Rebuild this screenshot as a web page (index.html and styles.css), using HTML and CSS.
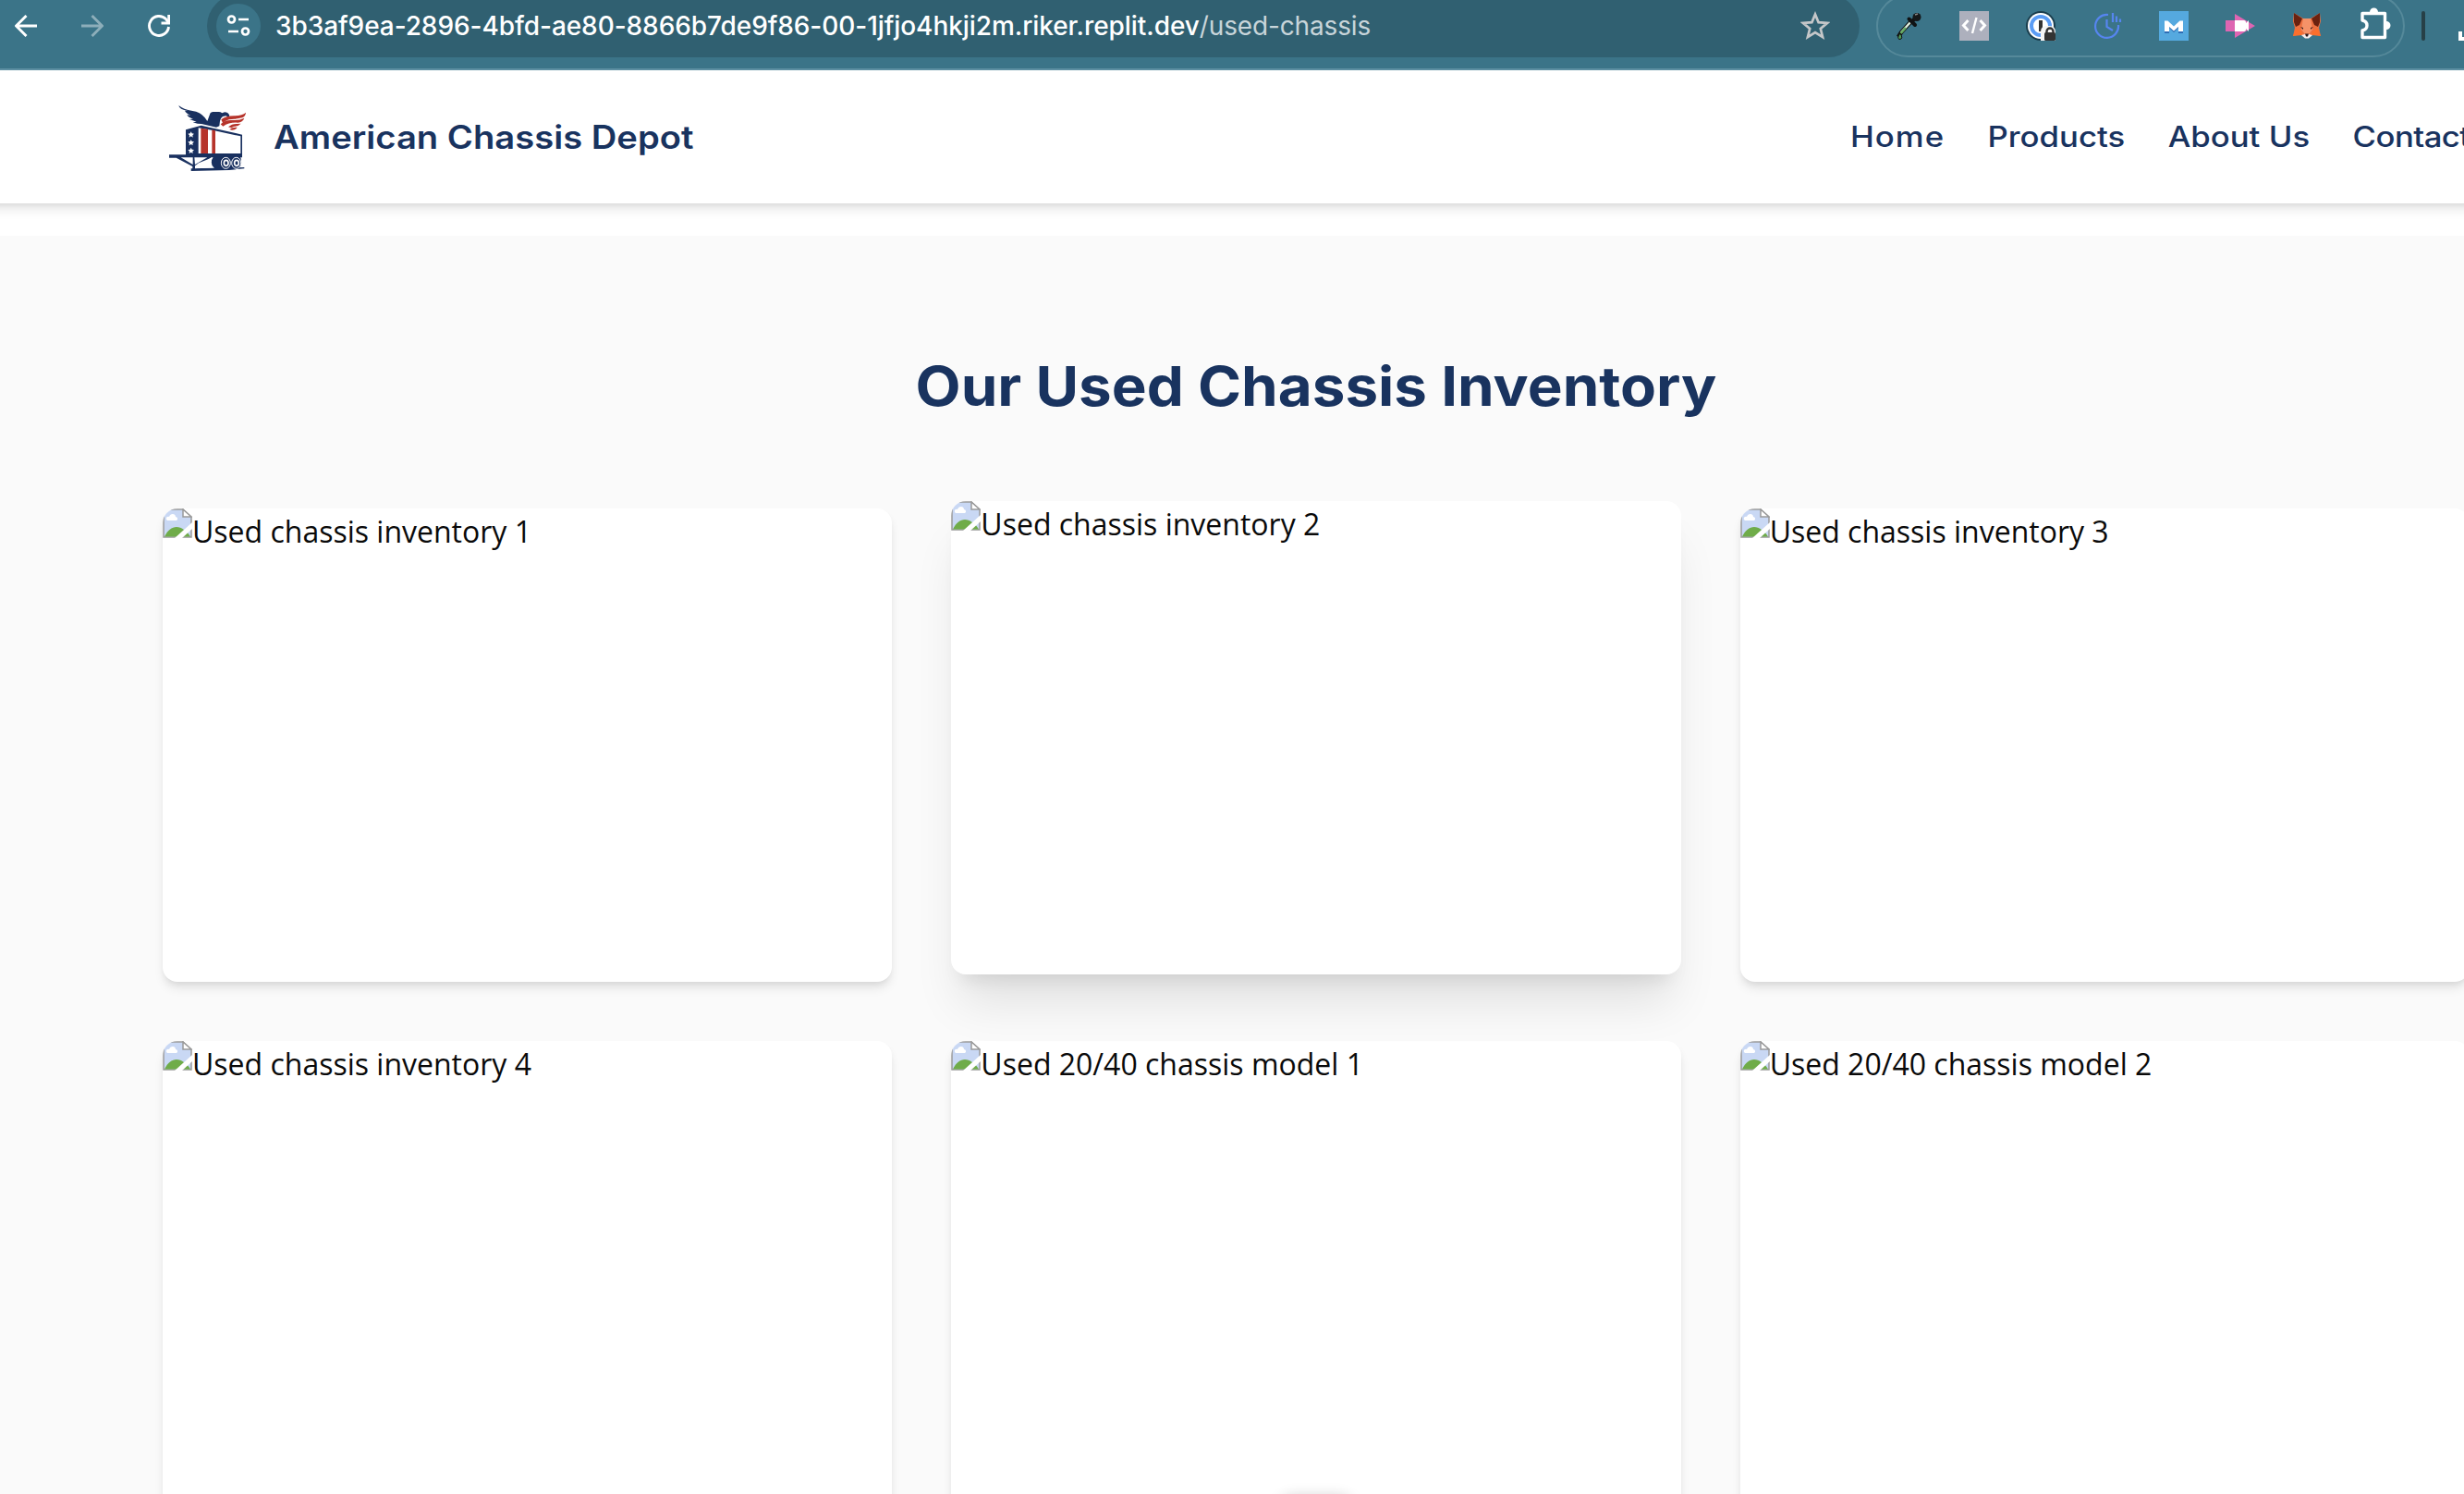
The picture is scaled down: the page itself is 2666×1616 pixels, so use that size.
FILE: index.html
```html
<!DOCTYPE html>
<html lang="en">
<head>
<meta charset="utf-8">
<title>American Chassis Depot</title>
<link rel="stylesheet" href="styles.css">
</head>
<body>
<svg class="defs" aria-hidden="true">
  <symbol id="broken" viewBox="0 0 32 32">
    <path d="M1 1H22L31 9V31H1Z" fill="#c9d8f4" stroke="#9a9a9a" stroke-width="1.5"/>
    <path d="M4 12c-1-3 2-4 3-3 1-4 7-4 7 0 2 0 3 3 1 4H5z" fill="#fff"/>
    <path d="M2 30.500C5 24 10 20 15 20s12 5 15 10.500Z" fill="#6fac49"/>
    <path d="M22 1V9H31Z" fill="#fff" stroke="#9a9a9a" stroke-width="1.500"/>
    <path d="M13 32L32 15V22L21 32Z" fill="#fff"/>
  </symbol>
</svg>

<div class="toolbar">
  <svg class="tool" viewBox="0 0 24 24"><path d="M24 12H2M12.500 1L1.500 12 12.500 23" fill="none" stroke="#fff" stroke-width="2.900"/></svg>
  <svg class="tool dim" viewBox="0 0 24 24"><path d="M0 12H22M11.500 1L22.500 12 11.500 23" fill="none" stroke="#fff" stroke-width="2.900"/></svg>
  <svg class="tool" viewBox="0 0 24 24"><path d="M22.500 13A10.500 10.500 0 1 1 19.500 4.600L22 8" fill="none" stroke="#fff" stroke-width="2.900"/><path d="M22.700 0V9H14.500" fill="none" stroke="#fff" stroke-width="2.900"/></svg>
  <div class="address">
    <span class="site-info">
      <svg width="26" height="26" viewBox="0 0 26 26" fill="none" stroke="#fff" stroke-width="2.700"><circle cx="5.500" cy="6" r="3.500"/><path d="M13 6H24M2 19H13"/><circle cx="20.500" cy="19" r="3.500"/></svg>
    </span>
    <span class="url">3b3af9ea-2896-4bfd-ae80-8866b7de9f86-00-1jfjo4hkji2m.riker.replit.dev<span class="path">/used-chassis</span></span>
    <svg class="star" viewBox="0 0 32 32"><path d="M16 3.500L19.600 12.200 29 12.900 21.800 19 24.100 28.200 16 23.200 7.900 28.200 10.200 19 3 12.900 12.400 12.200Z" fill="none" stroke="#c5c7c9" stroke-width="2.700"/></svg>
  </div>
  <div class="extensions">
    <svg viewBox="0 0 32 32"><path d="M20 11L9 23l-3 5" fill="none" stroke="#111" stroke-width="4.500"/><path d="M20 11L9 23" stroke="#dff0e0" stroke-width="2.500"/><path d="M14 18L8.500 24" stroke="#63ab62" stroke-width="2.500"/><path d="M17.500 8.500l6.500 6.500M21 11l5-5" stroke="#101314" stroke-width="4" stroke-linecap="round"/><circle cx="26" cy="6.500" r="4.500" fill="#151819"/><path d="M24 4l3-1" stroke="#888" stroke-width="1.500"/><path d="M8 24q-4 5-1 6.500 5 0 1-6.500" fill="#4f9b56" stroke="#111"/></svg>
    <svg viewBox="0 0 32 32"><path d="M0 0H32V32H0Z" fill="#adb0bd"/><path d="M9.500 10L4.500 15.500l5 5.500M22.500 10l5 5.500-5 5.500" fill="none" stroke="#fff" stroke-width="3"/><path d="M18.500 7L14 24" stroke="#fff" stroke-width="2.400"/></svg>
    <svg viewBox="0 0 32 32"><circle cx="16" cy="16" r="16" fill="#1a3d4d"/><circle cx="16" cy="16" r="14" fill="#fff"/><circle cx="16" cy="16" r="10" fill="#fff" stroke="#5a9cf5" stroke-width="4"/><path d="M14 10h4v12h-4z" fill="#333"/><path d="M16 32V22q0-6 7-6h3q6 0 6 7v9z" fill="#f5f5f5"/><rect x="20" y="23" width="12" height="9" rx="1.500" fill="#333"/><path d="M22.500 24v-2a3.500 3.500 0 0 1 7 0v2" fill="none" stroke="#333" stroke-width="2.400"/></svg>
    <svg viewBox="0 0 32 32" fill="none" stroke="#5685ef" stroke-width="2.200"><path d="M17 4A12.500 12.500 0 1 0 28 15"/><path d="M15.500 9V17L22 21M22 2V12M26 5.500V12M30 8.500V12"/></svg>
    <svg viewBox="0 0 32 32"><path d="M0 0H32V32H0Z" fill="#55a9df"/><path d="M6 24V12l2-1 8 8 8-8 2 1v12h-5v-6l-5 5-5-5v6z" fill="#2f6db5"/><path d="M6 22V10.500h3.500L16 16.500l6.500-6H26V22h-5v-5l-5 4.500-5-4.500v5z" fill="#fff"/></svg>
    <svg viewBox="0 0 32 32"><path d="M0 10H10V3L32 16 10 29V22H0Z" fill="#de65b2"/><path d="M10 10h10q2 0 2 2v1l3-3v12l-3-3v1q0 2-2 2H10z" fill="#fff"/></svg>
    <svg viewBox="0 0 32 32"><path d="M2 2l10 6h8l10-6 1 9-2 7 2 9-8-2-5 4h-4l-5-4-8 2 2-9-2-7z" fill="#ed7040"/><path d="M2 2l9 6-3 7-4 2-2-5zM30 2l-9 6 3 7 4 2 2-5z" fill="#6a210f"/><path d="M12 8h8l2 12-4 5h-4l-4-5z" fill="#f59268"/><path d="M1 27l3-8 6 3 1 4zM31 27l-3-8-6 3-1 4z" fill="#fb6f2c"/><path d="M10 26l4 3.500h4l4-3.500-4-1h-4z" fill="#f5eeee"/><path d="M14 24.500h4l-1 3h-2zM9 17l3 1v2zM23 17l-3 1v2z" fill="#32191a"/></svg>
    <svg class="puzzle" viewBox="0 0 36 36"><path d="M4 6.500H28.500V32.500H4V25q5-1 5-5.500T4 14Z" fill="none" stroke="#fff" stroke-width="3.400" stroke-linejoin="round"/><path d="M12 5a4.500 4.500 0 0 1 9 0zM30 15a4.500 4.500 0 0 1 0 9z" fill="#fff"/></svg>
  </div>
  <span class="divider"></span>
  <svg class="download" viewBox="0 0 28 10"><path d="M2 0V8H26V0" fill="none" stroke="#fff" stroke-width="4"/></svg>
</div>

<header class="header">
  <div class="brand">
    <svg class="logo" viewBox="0 0 288 258">
      <g fill="#19305f">
        <path d="M52 24q15 13 45 18 24 2 40 22l8 11 8-22q2-9 13-8h14q7-1 13 4l8-3q13 0 16 12l-3 5-8-5-11 2q-7 5-9 14l-2 17-10 4-48-11-13-1-15-4 12-2-23-8 12-1q-15-4-20-13l12 1q-15-6-19-15l10 1Q54 38 52 24Z"/>
        <path d="M75 103L125 89 258 119V192H75Z"/>
        <path d="M21 184H258V193H190L158 193 116 222V234H97V222L44 194H21Z"/>
        <path d="M165 190H252q9 28-6 38H168q-18-15-3-38Z"/>
        <path d="M92 229l173-4v4l-50 5-123 3z"/>
      </g>
      <path d="M190 70q14-12 42-12 27-1 38-11-1 13-12 17-16 4-34 5-18 1-29 12zM188 85q16-15 39-13 22 1 38-7-5 13-21 15-28-2-48 12zM213 94q12-11 29-10l12-1q-8 9-20 9-6 0-11 5zM217 102q8-8 25-7-5 9-17 9z" fill="#b6342b"/>
      <path d="M116 97l59 10 78 17V180H116Z" fill="#fff"/>
      <path d="M124 98l23 3V180H124ZM160 103l11 3V180H160Z" fill="#b6342b"/>
      <path d="M59 193H98V216ZM103 193H145L105 216ZM105 220l12-9 45-18q-11 20 1 33l-58 3z" fill="#fff"/>
      <g fill="#fff"><path id="s" d="M92 109l3 6 7 1-5 5 1 7-6-4-6 4 1-7-5-5 7-1z"/><use href="#s" y="26"/><use href="#s" y="52"/></g>
      <g fill="#19305f" stroke="#fff" stroke-width="3"><ellipse cx="205" cy="211" rx="15" ry="18"/><ellipse cx="239" cy="211" rx="15" ry="18"/></g>
      <g fill="#19305f" stroke="#fff" stroke-width="5"><ellipse cx="206" cy="211" rx="7" ry="9"/><ellipse cx="240" cy="211" rx="7" ry="9"/></g>
    </svg>
    <span class="brand-name">American Chassis Depot</span>
  </div>
  <nav class="nav">
    <a class="short">Home</a><a>Products</a><a>About Us</a><a class="last">Contact</a>
  </nav>
</header>

<main class="inventory">
  <h1>Our Used Chassis Inventory</h1>
  <div class="grid">
    <div class="card"><svg><use href="#broken"/></svg><span>Used chassis inventory 1</span></div>
    <div class="card raised"><svg><use href="#broken"/></svg><span>Used chassis inventory 2</span></div>
    <div class="card"><svg><use href="#broken"/></svg><span>Used chassis inventory 3</span></div>
    <div class="card"><svg><use href="#broken"/></svg><span>Used chassis inventory 4</span></div>
    <div class="card"><svg><use href="#broken"/></svg><span>Used 20/40 chassis model 1</span></div>
    <div class="card"><svg><use href="#broken"/></svg><span>Used 20/40 chassis model 2</span></div>
  </div>
</main>
<div class="floating"></div>
</body>
</html>
```
FILE: styles.css
```css
* { box-sizing: border-box; }
html { overflow: hidden; }
body {
  margin: 0;
  position: relative;
  width: 2666px;
  height: 1616px;
  overflow: hidden;
  background: #fff;
  font-family: "Open Sans", "Noto Sans", sans-serif;
}
svg { display: block; flex: none; }
.defs { display: none; }

/* Browser toolbar */
.toolbar {
  display: flex;
  align-items: flex-start;
  height: 76px;
  padding-left: 16px;
  overflow: hidden;
  background: #3b7488;
  border-bottom: 2px solid #5e90a3;
}
.tool { width: 24px; height: 24px; margin: 16px 48px 0 0; }
.tool.dim { opacity: .42; }
.address {
  display: flex;
  flex: none;
  align-items: center;
  width: 1788px;
  height: 68px;
  margin: -6px 18px 0 -8px;
  padding: 0 32px 0 10px;
  border-radius: 34px;
  background: #306071;
}
.site-info {
  display: flex;
  align-items: center;
  justify-content: center;
  width: 48px;
  height: 48px;
  border-radius: 50%;
  background: #3b7488;
}
.url {
  margin-left: 16px;
  font: 450 28px/34px Inter, sans-serif;
  letter-spacing: -.07px;
  color: #fff;
  white-space: nowrap;
}
.path { color: #c8d5da; font-weight: 400; letter-spacing: -.15px; }
.star { width: 32px; height: 32px; margin-left: auto; }
.extensions {
  display: flex;
  flex: none;
  align-items: center;
  gap: 40px;
  width: 572px;
  height: 68px;
  margin-top: -6px;
  padding-left: 16px;
  border: 2px solid #55899a;
  border-radius: 34px;
}
.extensions svg { width: 32px; height: 32px; }
.extensions .puzzle { width: 36px; height: 36px; margin-top: -4px; }
.divider {
  flex: none;
  width: 4px;
  height: 32px;
  margin: 12px 36px 0 18px;
  border-radius: 2px;
  background: #274047;
}
.download { width: 28px; height: 10px; margin-top: 34px; }

/* Site header */
.header {
  position: relative;
  display: flex;
  justify-content: space-between;
  align-items: center;
  width: 2864px;
  height: 144px;
  margin-left: -16px;
  padding: 0 176px 0 192px;
  background: #fff;
  color: #19335f;
  font-family: Inter, sans-serif;
  box-shadow: 0 8px 12px -2px rgba(0,0,0,.1), 0 4px 8px -4px rgba(0,0,0,.1);
}
.brand { display: flex; align-items: center; gap: 24px; }
.logo { width: 96px; height: 86px; margin-top: 2px; }
.brand-name {
  font-size: 35px;
  font-weight: 590;
  white-space: nowrap;
  transform: scaleX(1.091);
  transform-origin: left;
}
.nav {
  display: flex;
  gap: 41.5px;
  width: 670px;
  font-size: 31px;
  font-weight: 470;
  white-space: nowrap;
  margin-top: -2px;
  transform: scaleX(1.12);
  transform-origin: left;
}
.nav .short { letter-spacing: .9px; }
.nav .last { letter-spacing: -.5px; }

/* Inventory */
.inventory {
  width: 2848px;
  height: 1361px;
  margin-top: 35px;
  padding: 111px 176px 0;
  background: #fafafa;
}
h1 {
  margin: 0 0 80px;
  text-align: center;
  font: 700 59px/104px Inter, sans-serif;
  color: #19335f;
  transform: scaleX(1.08);
}
.grid {
  display: grid;
  grid-template-columns: repeat(3, 1fr);
  grid-auto-rows: 512px;
  gap: 64px;
}
.card {
  display: flex;
  align-items: flex-start;
  overflow: hidden;
  border-radius: 16px;
  background: #fff;
  box-shadow: 0 8px 12px -2px rgba(0,0,0,.1), 0 4px 8px -4px rgba(0,0,0,.1);
  font-size: 32px;
  line-height: 50px;
  color: #0a0a0a;
}
.card svg { width: 32px; height: 32px; }
.raised {
  transform: translateY(-8px);
  box-shadow: 0 40px 50px -10px rgba(0,0,0,.1), 0 16px 20px -12px rgba(0,0,0,.1);
}

/* Control just below the fold; only its shadow shows */
.floating {
  position: absolute;
  top: 1619px;
  left: 1384px;
  width: 80px;
  height: 80px;
  border-radius: 16px;
  box-shadow: 0 0 16px rgba(0,0,0,.2);
}
```
